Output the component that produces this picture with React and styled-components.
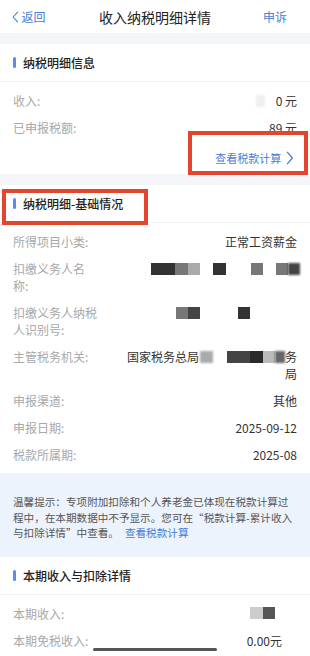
import React from "react";
import styled, { createGlobalStyle } from "styled-components";

const GlobalStyle = createGlobalStyle`
  html, body {
    margin: 0;
    padding: 0;
    background: #f3f5f8;
  }
  body {
    font-family: "Noto Sans CJK SC", "Noto Sans", Roboto, sans-serif;
  }
`;

const BLUE = "#4a7dd3";

const Screen = styled.div`
  position: relative;
  width: 310px;
  height: 656px;
  overflow: hidden;
  background: #f3f5f8;
`;

const NavBar = styled.div`
  height: 33px;
  background: #fff;
  display: flex;
  align-items: center;
  justify-content: space-between;
  padding: 0 23px 0 12px;
  position: relative;
`;

const Back = styled.div`
  display: flex;
  align-items: center;
  gap: 3px;
  color: ${BLUE};
  font-size: 12px;
`;

const NavTitle = styled.div`
  position: absolute;
  left: 0;
  right: 0;
  text-align: center;
  font-size: 14px;
  color: #222;
  pointer-events: none;
`;

const NavAction = styled.div`
  color: ${BLUE};
  font-size: 12px;
`;

const Section = styled.div`
  background: #fff;
  margin-top: ${(p) => (p.$flush ? 0 : 11)}px;
`;

const SectionHead = styled.div`
  height: 37px;
  display: flex;
  align-items: center;
  padding: 0 13px;
  border-bottom: 1px solid #f1f2f4;
  font-size: 12px;
  font-weight: 500;
  color: #222;

  &::before {
    content: "";
    width: 3px;
    height: 11px;
    border-radius: 2px;
    background: #5a8cee;
    margin-right: 7px;
  }
`;

const Rows = styled.div`
  padding: 5px 0 ${(p) => (p.$tight ? 0 : 5)}px;
`;

const Row = styled.div`
  display: flex;
  align-items: flex-start;
  padding: 5px ${(p) => p.$right || 13}px 5px 13px;
  font-size: 12px;
  line-height: 17px;
`;

const Label = styled.div`
  width: 86px;
  flex-shrink: 0;
  color: #a8a8a8;
`;

const Value = styled.div`
  flex: 1;
  display: flex;
  flex-direction: column;
  align-items: flex-end;
  color: #333;
  text-align: right;
`;

const Line = styled.div`
  display: flex;
  align-items: center;
  height: 17px;
`;

const Block = styled.span`
  display: inline-block;
  height: 12px;
  background: ${(p) => p.$c};
  filter: ${(p) => (p.$soft ? "blur(1px)" : "none")};
`;

const LinkRow = styled.div`
  height: 33px;
  display: flex;
  align-items: center;
  justify-content: flex-end;
  gap: 5px;
  padding: 0 16px 0 13px;
  color: ${BLUE};
  font-size: 11px;
`;

const Notice = styled.div`
  background: #edf3fc;
  padding: 21px 13px 16px;
  font-size: 10.6px;
  line-height: 15.5px;
  color: #555;
`;

const NoticeLink = styled.span`
  color: ${BLUE};
  margin-left: 6px;
`;

const Highlight = styled.div`
  position: absolute;
  left: ${(p) => p.$x}px;
  top: ${(p) => p.$y}px;
  width: ${(p) => p.$w}px;
  height: ${(p) => p.$h}px;
  box-sizing: border-box;
  border: 4px solid #e2462e;
  pointer-events: none;
`;

const HomeBar = styled.div`
  position: absolute;
  left: 93px;
  bottom: 5px;
  width: 124px;
  height: 3px;
  border-radius: 2px;
  background: #555;
`;

// [gap before, width, colour, soft]
function Mosaic({ blocks, trail = 0 }) {
  return (
    <>
      {blocks.map(([gap, w, c, soft], i) => (
        <Block
          key={i}
          $c={c}
          $soft={soft}
          style={{ width: w, marginLeft: gap, marginRight: i === blocks.length - 1 ? trail : 0 }}
        />
      ))}
    </>
  );
}

const Chevron = ({ dir = "left", color = BLUE, size = 12 }) => (
  <svg width={size * 0.55} height={size} viewBox="0 0 6 12" fill="none">
    <polyline
      points={dir === "left" ? "5.5,0.8 0.8,6 5.5,11.2" : "0.6,0.8 5.2,6 0.6,11.2"}
      stroke={color}
      strokeWidth="1.1"
      strokeLinejoin="round"
    />
  </svg>
);

export default function App() {
  return (
    <Screen>
      <GlobalStyle />
      <NavBar>
        <Back>
          <Chevron size={12} />
          <span>返回</span>
        </Back>
        <NavTitle>收入纳税明细详情</NavTitle>
        <NavAction>申诉</NavAction>
      </NavBar>

      <Section>
        <SectionHead>纳税明细信息</SectionHead>
        <Rows $tight>
          <Row>
            <Label>收入:</Label>
            <Value>
              <Line>
                <Mosaic blocks={[[0, 9, "#efefef", true]]} trail={11} />
                0 元
              </Line>
            </Value>
          </Row>
          <Row>
            <Label>已申报税额:</Label>
            <Value>89 元</Value>
          </Row>
        </Rows>
        <LinkRow>
          查看税款计算
          <Chevron dir="right" size={14} />
        </LinkRow>
      </Section>

      <Section>
        <SectionHead>纳税明细-基础情况</SectionHead>
        <Rows>
          <Row>
            <Label>所得项目小类:</Label>
            <Value>正常工资薪金</Value>
          </Row>
          <Row>
            <Label>扣缴义务人名称:</Label>
            <Value>
              <Line>
                <Mosaic
                  blocks={[
                    [0, 24, "#333"],
                    [0, 13, "#777"],
                    [0, 12, "#aaa"],
                    [13, 13, "#333"],
                    [25, 12, "#777"],
                    [13, 12, "#777"],
                    [0, 12, "#444", true],
                  ]}
                  trail={-3}
                />
              </Line>
            </Value>
          </Row>
          <Row>
            <Label>扣缴义务人纳税人识别号:</Label>
            <Value>
              <Line>
                <Mosaic
                  blocks={[
                    [0, 12, "#777"],
                    [0, 12, "#444"],
                    [38, 12, "#333"],
                  ]}
                  trail={47}
                />
              </Line>
            </Value>
          </Row>
          <Row>
            <Label>主管税务机关:</Label>
            <Value>
              <Line>
                国家税务总局
                <Mosaic
                  blocks={[
                    [1, 13, "#aaa", true],
                    [14, 23, "#444"],
                    [0, 13, "#2a2a2a"],
                    [0, 12, "#bbb"],
                    [0, 10, "#666", true],
                  ]}
                />
                务
              </Line>
              <Line>局</Line>
            </Value>
          </Row>
          <Row>
            <Label>申报渠道:</Label>
            <Value>其他</Value>
          </Row>
          <Row>
            <Label>申报日期:</Label>
            <Value>2025-09-12</Value>
          </Row>
          <Row>
            <Label>税款所属期:</Label>
            <Value>2025-08</Value>
          </Row>
        </Rows>
      </Section>

      <Notice>
        温馨提示：专项附加扣除和个人养老金已体现在税款计算过
        <br />
        程中，在本期数据中不予显示。您可在“税款计算-累计收入
        <br />
        与扣除详情”中查看。
        <NoticeLink>查看税款计算</NoticeLink>
      </Notice>

      <Section $flush>
        <SectionHead>本期收入与扣除详情</SectionHead>
        <Rows>
          <Row $right={28}>
            <Label>本期收入:</Label>
            <Value>
              <Line>
                <Mosaic
                  blocks={[
                    [0, 13, "#ccc"],
                    [0, 12, "#555"],
                  ]}
                  trail={7}
                />
              </Line>
            </Value>
          </Row>
          <Row $right={28}>
            <Label>本期免税收入:</Label>
            <Value>0.00元</Value>
          </Row>
        </Rows>
      </Section>

      <Highlight $x={188} $y={131} $w={120} $h={44} />
      <Highlight $x={2} $y={189} $w={146} $h={36} />
      <HomeBar />
    </Screen>
  );
}
